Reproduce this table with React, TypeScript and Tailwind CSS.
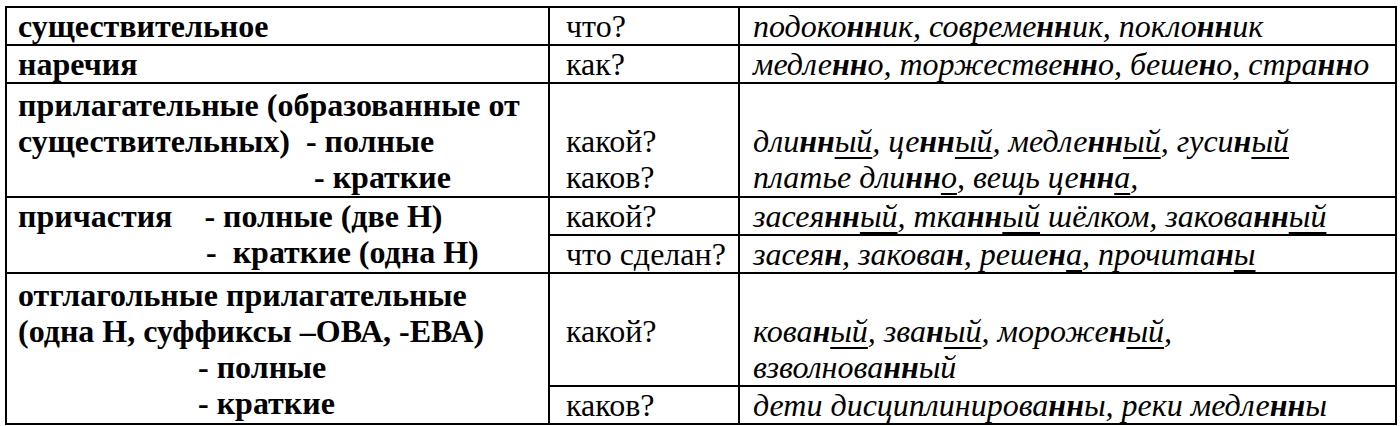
import React from "react";

type C = { children?: React.ReactNode };

const B = ({ children }: C) => <b className="font-bold">{children}</b>;
const U = ({ children }: C) => (
  <span className="underline decoration-2 underline-offset-[5px]">{children}</span>
);

const fam = "[font-family:Liberation_Serif,Times_New_Roman,serif]";
const c1 = `border-2 border-black align-top pl-[11px] pr-1 font-bold text-[32px] leading-[36px] whitespace-pre ${fam}`;
const c2 = `border-2 border-black align-top pl-[16px] pr-1 text-[32px] leading-[36px] whitespace-nowrap ${fam}`;
const c3 = `border-2 border-black align-top pl-[13px] pr-1 italic text-[32px] leading-[36px] whitespace-nowrap ${fam}`;

export default function App() {
  return (
    <div className="w-[1400px] h-[426px] bg-white pl-[5px] pt-[6px] text-black [font-family:Liberation_Serif,Times_New_Roman,serif]">
      <table className="border-collapse table-fixed w-[1390px]">
        <colgroup>
          <col className="w-[543px]" />
          <col className="w-[190px]" />
          <col className="w-[657px]" />
        </colgroup>
        <tbody>
          <tr className="h-[38px]">
            <td className={c1}>существительное</td>
            <td className={c2}>что?</td>
            <td className={c3}>
              подоко<B>нн</B>ик, совреме<B>нн</B>ик, покло<B>нн</B>ик
            </td>
          </tr>
          <tr className="h-[37px]">
            <td className={c1}>наречия</td>
            <td className={c2}>как?</td>
            <td className={c3}>
              медле<B>нн</B>о, торжестве<B>нн</B>о, беше<B>н</B>о, стра<B>нн</B>о
            </td>
          </tr>
          <tr className="h-[114px]">
            <td className={c1 + " pt-[3px]"}>
              <div>прилагательные (образованные от</div>
              <div>существительных)  - полные</div>
              <div className="pl-[296px]">- краткие</div>
            </td>
            <td className={c2 + " pt-[3px]"}>
              <div>&nbsp;</div>
              <div>какой?</div>
              <div>каков?</div>
            </td>
            <td className={c3 + " pt-[3px]"}>
              <div>&nbsp;</div>
              <div>
                дли<B>нн</B><U>ый</U>, це<B>нн</B><U>ый</U>, медле<B>нн</B><U>ый</U>, гуси<B>н</B><U>ый</U>
              </div>
              <div>
                платье дли<B>нн</B><U>о</U>, вещь це<B>нн</B><U>а</U>,
              </div>
            </td>
          </tr>
          <tr className="h-[37px]">
            <td className={c1} rowSpan={2}>
              <div>причастия    - полные (две Н)</div>
              <div className="pl-[188px]">-  краткие (одна Н)</div>
            </td>
            <td className={c2}>какой?</td>
            <td className={c3}>
              засея<B>нн</B><U>ый</U>, тка<B>нн</B><U>ый</U> шёлком, закова<B>нн</B><U>ый</U>
            </td>
          </tr>
          <tr className="h-[38px]">
            <td className={c2}>что сделан?</td>
            <td className={c3}>
              засея<B>н</B>, закова<B>н</B>, реше<B>н</B><U>а</U>, прочита<B>н</B><U>ы</U>
            </td>
          </tr>
          <tr className="h-[113px]">
            <td className={c1 + " pt-[3px]"} rowSpan={2}>
              <div>отглагольные прилагательные</div>
              <div>(одна Н, суффиксы –ОВА, -ЕВА)</div>
              <div className="pl-[180px]">- полные</div>
              <div className="pl-[180px]">- краткие</div>
            </td>
            <td className={c2 + " pt-[3px]"}>
              <div>&nbsp;</div>
              <div>какой?</div>
            </td>
            <td className={c3 + " pt-[3px]"}>
              <div>&nbsp;</div>
              <div>
                кова<B>н</B><U>ый</U>, зва<B>н</B><U>ый</U>, мороже<B>н</B><U>ый</U>,
              </div>
              <div>
                взволнова<B>нн</B>ый
              </div>
            </td>
          </tr>
          <tr className="h-[38px]">
            <td className={c2}>каков?</td>
            <td className={c3}>
              дети дисциплинирова<B>нн</B>ы, реки медле<B>нн</B>ы
            </td>
          </tr>
        </tbody>
      </table>
    </div>
  );
}
